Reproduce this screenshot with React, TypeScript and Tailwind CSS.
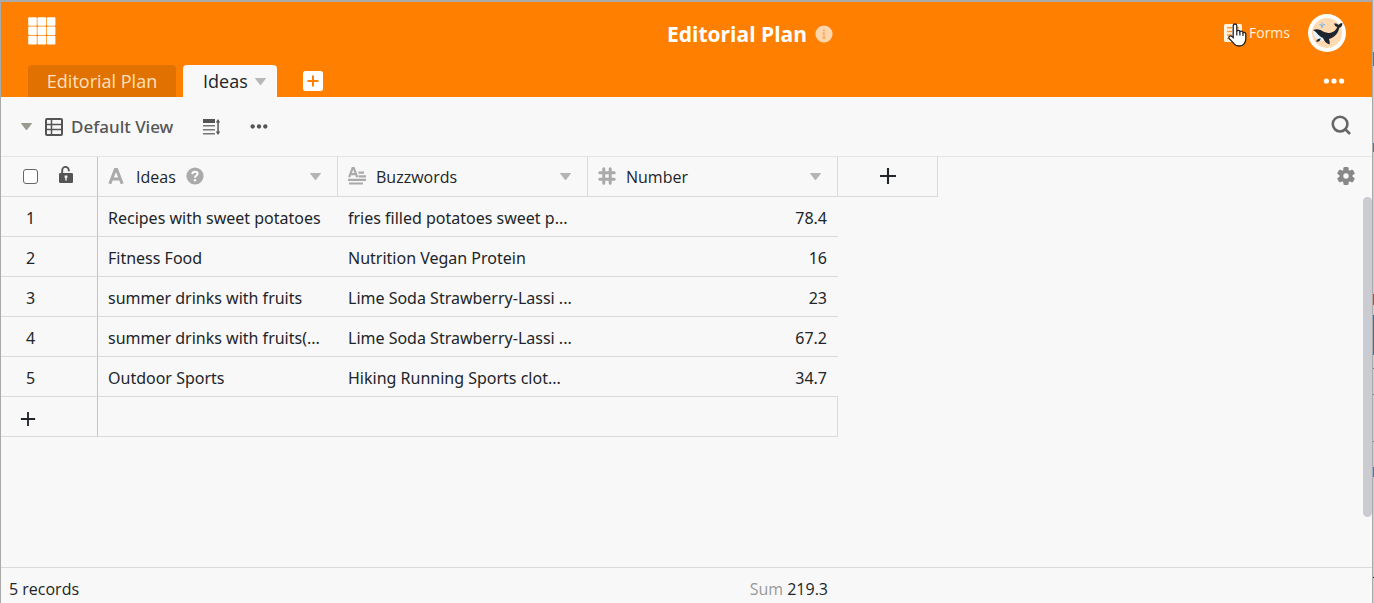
import React from "react";
import { Search } from "lucide-react";

type IconProps = { className?: string };

const AppsIcon = () => (
  <svg width="28" height="28" viewBox="0 0 28 28" fill="#fff">
    {[0, 9.3, 18.6].map((y) =>
      [0, 9.3, 18.6].map((x) => <rect key={`${x}-${y}`} x={x + 0.2} y={y + 0.2} width="8.600" height="8.600" rx="1" />)
    )}
  </svg>
);

const Caret = ({ className }: IconProps) => (
  <svg width="13" height="9" viewBox="0 0 14 10" className={className} fill="currentColor">
    <path d="M1.4 1h11.2q.9 0 .4.8L7.700 8.600q-.7.8-1.400 0L1 1.800Q.5 1 1.400 1z" />
  </svg>
);

const Dots = ({ className }: IconProps) => (
  <svg width="22" height="6" viewBox="0 0 22 6" className={className} fill="currentColor">
    <circle cx="3.400" cy="3" r="2.600" />
    <circle cx="11" cy="3" r="2.600" />
    <circle cx="18.600" cy="3" r="2.600" />
  </svg>
);

const TableIcon = () => (
  <svg width="18" height="18" viewBox="0 0 18 18" fill="none" stroke="#555" strokeWidth="2">
    <rect x="1" y="1" width="16" height="16" rx="1" />
    <path d="M1 6.500h16M1 11.500h16M6.500 1v16" strokeWidth="1.500" />
  </svg>
);

const RowHeightIcon = () => (
  <svg width="18" height="18" viewBox="0 0 18 18" fill="#555">
    <rect x="0" y="1" width="12" height="4" />
    <path d="M0 7h12v1.500H0zM0 11h12v1.500H0zM0 15h12v1.500H0z" fill="#777" />
    <path d="M14.300 4h1.500v10h-1.500z" />
    <path d="M15 1l2.200 3.400h-4.400zM15 17l2.200-3.400h-4.400z" />
  </svg>
);

const UnlockIcon = () => (
  <svg width="16" height="18" viewBox="0 0 16 18">
    <path d="M4.200 8V4.200a3.300 3.300 0 0 1 6.600 0v1.100" fill="none" stroke="#555" strokeWidth="1.900" />
    <rect x="1" y="7" width="14" height="10" rx="1.200" fill="#555" />
    <path d="M6.600 9.500h2.800v2.200h-.7v2.800H7.300v-2.800h-.7z" fill="#f8f8f8" />
  </svg>
);

const TextIcon = () => (
  <svg width="16" height="16" viewBox="0 0 16 16" fill="none" stroke="#aaa" strokeWidth="3">
    <path d="M1.800 15.800L7.300 1.600h1.400L14.200 15.800M4 11h8" />
  </svg>
);

const LongTextIcon = () => (
  <svg width="18" height="18" viewBox="0 0 18 18" fill="#aaa">
    <path d="M1.200 10.200L4.600 1.200h1.200l3.400 9M2.800 7.200h5" fill="none" stroke="#aaa" strokeWidth="2.200" />
    <path d="M10.500 4.600H16v2.200h-5.500zM10.500 8.200H18v2.200h-7.500zM0 11.800h18V14H0zM1 15.400h14v2.200H1z" />
  </svg>
);

const NumberIcon = () => (
  <svg width="18" height="18" viewBox="0 0 18 18" fill="none" stroke="#aaa" strokeWidth="3" strokeLinecap="round">
    <path d="M5.800 1.800v14.400M12.200 1.800v14.400M1.800 5.800h14.400M1.800 12.200h14.400" />
  </svg>
);

const HelpIcon = () => (
  <svg width="18" height="18" viewBox="0 0 18 18">
    <circle cx="9" cy="9" r="8.600" fill="#aaa" />
    <path d="M6.200 7.200Q6.400 4.700 9 4.700t2.600 2.100q0 1.200-1.300 1.900T9 10.800" fill="none" stroke="#fff" strokeWidth="2" />
    <circle cx="9" cy="13.200" r="1.200" fill="#fff" />
  </svg>
);

const InfoIcon = () => (
  <svg width="18" height="18" viewBox="0 0 18 18">
    <circle cx="9" cy="9" r="8.600" fill="#ffd5ab" />
    <circle cx="9" cy="5.400" r="1" fill="#f7a85c" />
    <path d="M7.600 8H9v5M7.400 13h3.200" fill="none" stroke="#f7a85c" strokeWidth="1.300" />
  </svg>
);

const GearIcon = () => (
  <svg width="18" height="18" viewBox="0 0 18 18" fill="#888">
    {[0, 60, 120].map((a) => (
      <rect key={a} x="6.400" y="0" width="5.200" height="18" rx="1.200" transform={`rotate(${a} 9 9)`} />
    ))}
    <circle cx="9" cy="9" r="6.600" />
    <circle cx="9" cy="9" r="2.700" fill="#f8f8f8" />
  </svg>
);

const PlusIcon = ({ size }: { size: number }) => (
  <svg width={size} height={size} viewBox="0 0 18 18" stroke="#212529" strokeWidth="2.100">
    <path d="M9 1v16M1 9h16" />
  </svg>
);

const FormsIcon = () => (
  <svg width="18" height="18" viewBox="0 0 18 18">
    <rect width="18" height="18" rx="1.500" fill="#fff3e4" />
    <path d="M3 3.800h5M3 7.500h5M3 11h5M3 14.400h5M10 3.800h5M10 7.500h5M10 11h5" stroke="#ff9a35" strokeWidth="1.500" />
  </svg>
);

const HandCursor = () => (
  <svg width="19" height="24" viewBox="0 0 19 24" className="pointer-events-none absolute left-1 top-0">
    <path
      d="M5.200 14.600V2.800Q5.300 1 7 1t1.800 1.800v5.400q.4-.9 1.600-.8 1.400.1 1.500 1.300.5-.7 1.600-.6 1.400.2 1.500 1.500.5-.4 1.300-.3 1.500.2 1.500 1.900v4.600q0 3.200-1.700 5-1.600 2.200-5 2.200-3.300 0-4.900-2.100L1.300 15.600Q.4 14 1.500 13.200q1.200-.8 2.500.4z"
      fill="#fff"
      stroke="#222"
      strokeWidth="1.300"
    />
    <path d="M8.800 8v4.500M11.900 9v3.500M15 10v3" fill="none" stroke="#222" strokeWidth="1.200" />
  </svg>
);

const Avatar = () => (
  <svg width="38" height="38" viewBox="0 0 38 38">
    <circle cx="19" cy="19" r="19" fill="#fff" />
    <circle cx="19" cy="19" r="15" fill="#ffd9b0" />
    <path d="M5 15.500Q4.500 23 11 26q6 2 11-1l2-4-12-4z" fill="#e4f6ff" />
    <path
      d="M5 16q3.500-1.700 7.500 0 5 3.600 9 3 6-1 7.800-6-3-.6-3-3.800 3.200 0 4.200 1.700 1.200-2 3.900-2 .3 3.700-3.100 4.900-.9 5.500-5.600 9-2.600 1.800-4.700 2.200 1.200 3 .5 5.400-4.500-1-6.500-6.400-2.500-1-5-3.500Q8.300 17.500 5 16z"
      fill="#1f252e"
    />
    <path d="M8 27.500q1.200-3 4.700-3-1 4-4.700 3z" fill="#1f252e" />
    <path d="M11.500 11q2-1.600 2.600 2.800.5-4.400 3-2.800M13.400 9h1.500" fill="none" stroke="#79b8e8" strokeWidth="1.200" />
  </svg>
);

const columns = [
  { name: "Ideas", icon: <TextIcon />, help: true },
  { name: "Buzzwords", icon: <LongTextIcon />, help: false },
  { name: "Number", icon: <NumberIcon />, help: false },
];

const records = [
  ["Recipes with sweet potatoes", "fries filled potatoes sweet p...", "78.4"],
  ["Fitness Food", "Nutrition Vegan Protein", "16"],
  ["summer drinks with fruits", "Lime Soda Strawberry-Lassi ...", "23"],
  ["summer drinks with fruits(...", "Lime Soda Strawberry-Lassi ...", "67.2"],
  ["Outdoor Sports", "Hiking Running Sports clot...", "34.7"],
];

function Header() {
  return (
    <header className="bg-[#ff8000] px-[27px] text-white">
      <div className="grid h-[63px] grid-cols-[1fr_auto_1fr] items-center">
        <button aria-label="All apps" className="mb-1.5 justify-self-start">
          <AppsIcon />
        </button>
        <div className="ml-[127px] flex items-center gap-2">
          <h1 className="text-[21px] font-bold leading-7">Editorial Plan</h1>
          <button aria-label="About this base"><InfoIcon /></button>
        </div>
        <div className="-mr-px mb-0.5 flex items-center gap-[18px] justify-self-end">
          <button className="relative flex items-center gap-[7px] text-[14px] leading-5 text-[#fff0df]">
            <FormsIcon />
            Forms
            <HandCursor />
          </button>
          <button aria-label="Account"><Avatar /></button>
        </div>
      </div>
      <nav className="flex h-8 items-center">
        <a href="#plan" className="flex h-8 w-[148px] items-center justify-center rounded-t bg-[#e17100] text-[18px] text-[#ffe0bf]">
          Editorial Plan
        </a>
        <a href="#ideas" className="ml-[7px] flex h-8 w-[94px] items-center gap-1.5 rounded-t bg-[#f8f8f8] pl-5 text-[18px] text-[#212529]">
          Ideas
          <Caret className="text-[#b8b8b8]" />
        </a>
        <button aria-label="Add table" className="ml-[26px]">
          <svg width="20" height="20" viewBox="0 0 20 20">
            <rect width="20" height="20" rx="2.500" fill="#fff" />
            <path d="M10 4.500v11M4.500 10h11" stroke="#ff8000" strokeWidth="2" />
          </svg>
        </button>
        <button aria-label="More" className="ml-auto"><Dots /></button>
      </nav>
    </header>
  );
}

function Toolbar() {
  return (
    <div className="flex h-[59px] items-center px-[19px] text-[#555]">
      <button aria-label="Toggle views"><Caret className="text-[#999990]" /></button>
      <button className="ml-3 flex items-center gap-2 font-['Noto_Sans','Open_Sans',sans-serif] text-[17px] font-medium leading-6">
        <TableIcon />
        Default View
      </button>
      <button aria-label="Row height" className="ml-[30px]"><RowHeightIcon /></button>
      <button aria-label="View options" className="ml-7"><Dots className="h-[5px] w-5" /></button>
      <button aria-label="Search" className="mb-1 ml-auto mr-px"><Search size={22} strokeWidth={2.8} color="#666" /></button>
    </div>
  );
}

function Grid() {
  return (
    <div className="relative grow border-t border-[#e4e4e4]">
      <table className="w-[937px] table-fixed border-separate border-spacing-0 text-[16px] leading-6">
        <colgroup>
          <col className="w-[97px]" />
          <col className="w-[240px]" />
          <col className="w-[250px]" />
          <col className="w-[250px]" />
          <col className="w-[100px]" />
        </colgroup>
        <thead>
          <tr className="h-10">
            <th className="border-b border-r border-b-[#dadada] border-r-[#c4c4c4] p-0">
              <div className="flex items-center pl-[22px]">
                <input
                  type="checkbox"
                  aria-label="Select all records"
                  className="size-[15px] appearance-none rounded-[3px] border border-[#666] bg-white"
                />
                <button aria-label="Unlock columns" className="mb-1 ml-5"><UnlockIcon /></button>
              </div>
            </th>
            {columns.map((c) => (
              <th key={c.name} className="border-b border-r border-[#dadada] px-2.5 py-0 font-normal">
                <div className="flex items-center">
                  <span className="flex w-7 items-center pb-0.5">{c.icon}</span>
                  {c.name}
                  {c.help && <button aria-label="Column description" className="pb-0.5 pl-2.5"><HelpIcon /></button>}
                  <button aria-label={`${c.name} menu`} className="ml-auto mr-[5px]"><Caret className="text-[#b4b4b4]" /></button>
                </div>
              </th>
            ))}
            <th className="border-b border-r border-[#dadada] p-0">
              <button aria-label="Add column" className="flex w-full justify-center pb-0.5"><PlusIcon size={18} /></button>
            </th>
          </tr>
        </thead>
        <tbody className="font-['Noto_Sans','Open_Sans',sans-serif]">
          {records.map((r, i) => (
            <tr key={i} className="h-10">
              <td className="border-b border-r border-b-[#dadada] border-r-[#c4c4c4] pb-0 pl-[25px] pr-0 pt-0.5">{i + 1}</td>
              <td className="whitespace-nowrap border-b border-[#dadada] pb-0 pl-2.5 pr-0 pt-0.5">{r[0]}</td>
              <td className="whitespace-nowrap border-b border-[#dadada] pb-0 pl-2.5 pr-0 pt-0.5">{r[1]}</td>
              <td className="border-b border-[#dadada] pb-0 pr-[11px] pt-0.5 text-right">{r[2]}</td>
              <td className="p-0" />
            </tr>
          ))}
          <tr className="h-10">
            <td className="border-b border-r border-b-[#dadada] border-r-[#c4c4c4] py-0 pl-[19px] pr-0">
              <button aria-label="Add record" className="flex pt-1"><PlusIcon size={16} /></button>
            </td>
            <td colSpan={3} className="border-b border-r border-[#dadada] p-0" />
            <td className="p-0" />
          </tr>
        </tbody>
      </table>
      <button aria-label="Grid settings" className="absolute right-[17px] top-[10px]">
        <GearIcon />
      </button>
      <div className="absolute right-0 top-10 h-80 w-[9px] rounded-md bg-[#cbccd2]" />
    </div>
  );
}

const backdropMarks = [
  { top: 52, height: 14, color: "bg-[#4a7aa0]" },
  { top: 143, height: 9, color: "bg-[#4a7aa0]" },
  { top: 294, height: 11, color: "bg-[#c04848]" },
  { top: 315, height: 40, color: "bg-[#3c6f93]" },
  { top: 368, height: 1, color: "bg-[#777777]" },
  { top: 394, height: 1, color: "bg-[#777777]" },
  { top: 441, height: 1, color: "bg-[#777777]" },
  { top: 467, height: 10, color: "bg-[#5577a5]" },
  { top: 577, height: 1, color: "bg-[#222222]" },
];

export default function App() {
  return (
    <div className="relative flex min-h-screen bg-[#cfcfcf] pr-px font-['Open_Sans','Noto_Sans',sans-serif] text-[#212529]">
      <div className="flex grow flex-col border-x border-t-2 border-[#aaaaaa] bg-[#f8f8f8]">
        <Header />
        <Toolbar />
        <Grid />
        <footer className="flex h-9 items-center border-t border-[#dadada] pl-2 pt-1.5 text-[16px] leading-6">
          <div className="flex w-[819px] justify-between">
            <span>5 records</span>
            <span><span className="text-[#999]">Sum</span> 219.3</span>
          </div>
        </footer>
      </div>
      {backdropMarks.map((m) => (
        <div key={m.top} className={`absolute right-0 w-px ${m.color}`} style={{ top: m.top, height: m.height }} />
      ))}
    </div>
  );
}
